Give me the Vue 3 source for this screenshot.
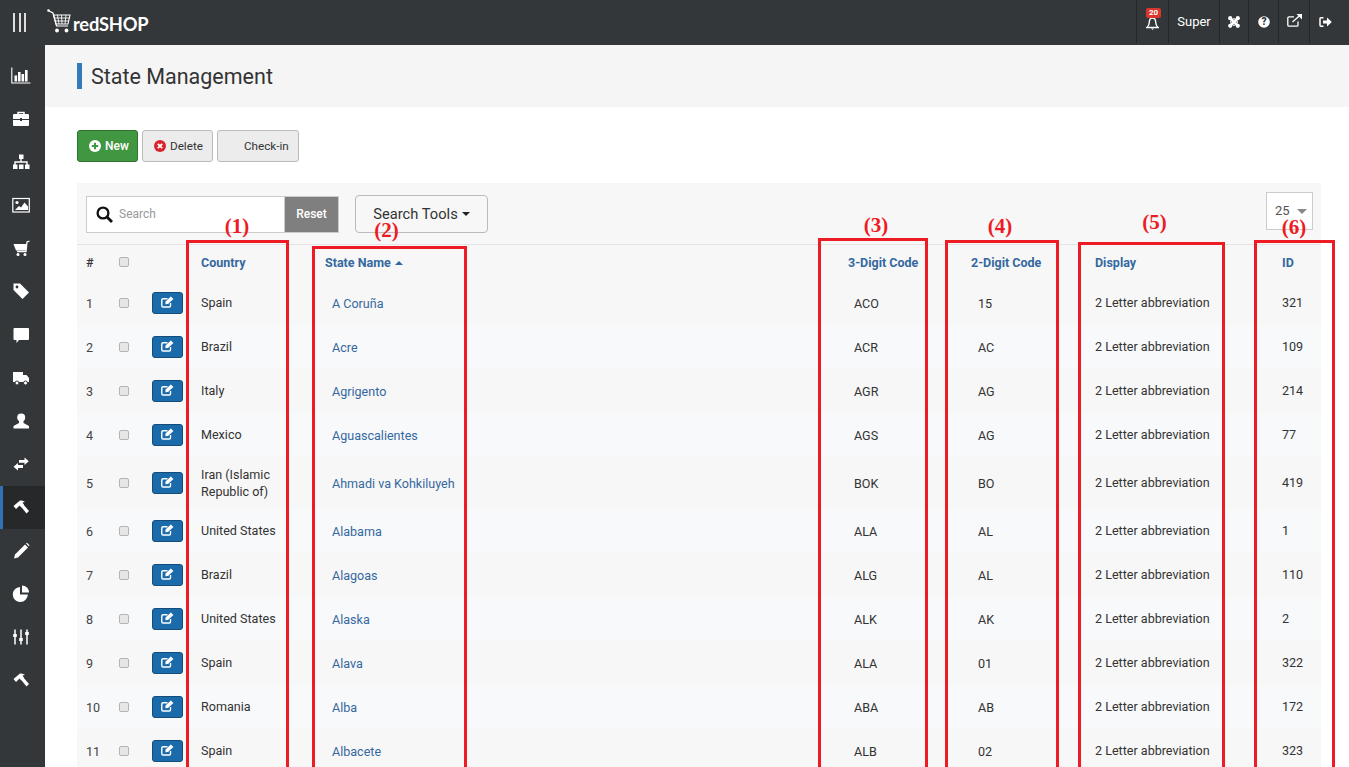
<template>
  <div class="app">
    <header class="topbar">
      <div class="burger"><span></span><span></span><span></span></div>
      <div class="logo">
        <svg class="cart" width="24" height="24" viewBox="0 0 24 24">
          <circle cx="1.5" cy="1.5" r="1.3" fill="#fff" />
          <path d="M2 2 L6 4 L9.5 17 H21" fill="none" stroke="#fff" stroke-width="1.2" />
          <path d="M6.5 6 H23 L21 15 H9 Z" fill="none" stroke="#fff" stroke-width="1.1" />
          <path d="M7 9 H22.5 M8 12 H22 M10.5 6 L12 15 M14.5 6 L15 15 M19 6 L18 15" stroke="#fff" stroke-width="0.9" fill="none" />
          <circle cx="10" cy="21.5" r="1.9" fill="#fff" />
          <circle cx="19.5" cy="21.5" r="1.9" fill="#fff" />
        </svg>
        <span class="logo-text">redSHOP</span>
      </div>
      <div class="top-actions">
        <div class="top-item bell">
          <svg width="13" height="15" viewBox="0 0 14 15"><path d="M7 1.5 C4.5 1.5 3.6 3.5 3.6 6 C3.6 9 2.6 10.5 1 11.8 H13 C11.4 10.5 10.4 9 10.4 6 C10.4 3.5 9.5 1.5 7 1.5 Z" fill="none" stroke="#fff" stroke-width="1.5" /><path d="M5.5 13 H8.5 L7 14.6 Z" fill="#fff" /></svg>
          <span class="badge">20</span>
        </div>
        <div class="top-item user">Super</div>
        <div class="top-item icon w29">
          <svg width="12" height="12" viewBox="0 0 12 12">
            <path d="M2.4 2.4 L9.6 9.6 M9.6 2.4 L2.4 9.6" stroke="#fff" stroke-width="2.8" />
            <path d="M2.2 6 L6 2.2 L9.8 6 L6 9.8 Z" fill="none" stroke="#fff" stroke-width="1" />
            <circle cx="2.2" cy="2.2" r="2.1" fill="#fff" />
            <circle cx="9.8" cy="2.2" r="2.1" fill="#fff" />
            <circle cx="2.2" cy="9.8" r="2.1" fill="#fff" />
            <circle cx="9.8" cy="9.8" r="2.1" fill="#fff" />
          </svg>
        </div>
        <div class="top-item icon w30">
          <svg width="12" height="12" viewBox="0 0 12 12"><circle cx="6" cy="6" r="5.8" fill="#fff" /><text x="6" y="9.4" text-anchor="middle" class="qmark">?</text></svg>
        </div>
        <div class="top-item icon w31">
          <svg class="lift" width="15" height="13" viewBox="0 0 15 13" fill="none" stroke="#fff" stroke-width="1.3"><path d="M11 7.5 V11 A1.2 1.2 0 0 1 9.8 12.2 H2 A1.2 1.2 0 0 1 0.8 11 V4 A1.2 1.2 0 0 1 2 2.8 H7" /><path d="M5.5 8 L12.5 1.8" /><path d="M9.5 0 H15 V5.5 Z" fill="#fff" stroke="none" /></svg>
        </div>
        <div class="top-item icon last">
          <svg width="13" height="10" viewBox="0 0 13 10" fill="#fff"><path d="M4.5 0.8 H2 A1 1 0 0 0 1 1.8 V8.2 A1 1 0 0 0 2 9.2 H4.5" fill="none" stroke="#fff" stroke-width="1.5" /><path d="M4 3.5 H8 V0.5 L12.8 5 L8 9.5 V6.5 H4 Z" /></svg>
        </div>
      </div>
    </header>

    <div class="body">
      <nav class="sidebar">
        <a v-for="(item, i) in navItems" :key="i" class="nav-item" :class="{ active: i === 10 }">
          <svg width="20" height="20" viewBox="0 0 20 20" v-html="item"></svg>
        </a>
      </nav>

      <main class="content">
        <div class="title-bar">
          <h1>State Management</h1>
        </div>

        <div class="page">
          <div class="toolbar">
            <button class="btn btn-new">
              <svg width="12" height="12" viewBox="0 0 12 12"><circle cx="6" cy="6" r="6" fill="#fff" /><path d="M6 2.8 V9.2 M2.8 6 H9.2" stroke="#419641" stroke-width="2" /></svg>
              New
            </button>
            <button class="btn btn-delete">
              <svg width="12" height="12" viewBox="0 0 12 12"><circle cx="6" cy="6" r="6" fill="#d9232e" /><path d="M3.8 3.8 L8.2 8.2 M8.2 3.8 L3.8 8.2" stroke="#fff" stroke-width="1.8" /></svg>
              Delete
            </button>
            <button class="btn btn-check">Check-in</button>
          </div>

          <section class="panel">
            <div class="filters">
              <div class="search">
                <div class="search-box">
                  <svg width="17" height="17" viewBox="0 0 17 17" fill="none" stroke="#111" stroke-width="2.3"><circle cx="7" cy="7" r="5.4" /><path d="M11 11 L16 16" stroke-width="2.8" /></svg>
                  <span>Search</span>
                </div>
                <div class="reset">Reset</div>
              </div>
              <button class="tools">Search Tools<i class="caret"></i></button>
              <div class="limit">25<i class="caret-grey"></i></div>
            </div>

            <table class="grid">
              <colgroup>
                <col style="width: 33px" />
                <col style="width: 33px" />
                <col style="width: 49px" />
                <col style="width: 124px" />
                <col />
                <col style="width: 123px" />
                <col style="width: 124px" />
                <col style="width: 187px" />
                <col style="width: 48px" />
              </colgroup>
              <thead>
                <tr>
                  <th class="num">#</th>
                  <th><span class="check"></span></th>
                  <th></th>
                  <th>Country</th>
                  <th>State Name <i class="sort"></i></th>
                  <th>3-Digit Code</th>
                  <th>2-Digit Code</th>
                  <th>Display</th>
                  <th>ID</th>
                </tr>
              </thead>
              <tbody>
                <tr v-for="(row, i) in rows" :key="row.id">
                  <td class="num">{{ i + 1 }}</td>
                  <td><span class="check"></span></td>
                  <td>
                    <span class="edit">
                      <svg width="13" height="12" viewBox="0 0 13 12" fill="none" stroke="#fff" stroke-width="1.4"><path d="M9.5 7 V9.8 A1.2 1.2 0 0 1 8.3 11 H2 A1.2 1.2 0 0 1 0.8 9.8 V4 A1.2 1.2 0 0 1 2 2.8 H6.5" /><path d="M4.3 8.3 L4.6 5.6 L9.8 0.6 L12.4 3 L7 8 Z" fill="#fff" stroke="none" /></svg>
                    </span>
                  </td>
                  <td :class="{ up: row.country.length < 20 }">{{ row.country }}</td>
                  <td class="indent"><a>{{ row.name }}</a></td>
                  <td class="indent code3">{{ row.code3 }}</td>
                  <td class="indent">{{ row.code2 }}</td>
                  <td class="up">2 Letter abbreviation</td>
                  <td class="up">{{ row.id }}</td>
                </tr>
              </tbody>
            </table>
          </section>
        </div>

        <div class="mark" v-for="m in marks" :key="m.n" :style="{ left: m.x + 'px', top: m.y + 'px', width: m.w + 'px' }">
          <span class="mark-label" :style="{ top: m.ly + 'px', marginLeft: m.dx + 'px' }">({{ m.n }})</span>
        </div>
      </main>
    </div>
  </div>
</template>

<script setup>
const hammer =
  '<path d="M2.5 9 L9 3.5 Q12 3 14 5 L11.5 5.5 L13 8 L10.5 10.5 L8.5 8.5 L5 12 Z" fill="#fff"/><path d="M9.5 9 L12 7 L18 14 L15.5 16.5 Z" fill="#fff"/>'

const navItems = [
  '<path d="M0.8 1.5 V17 H19.5" fill="none" stroke="#fff" stroke-width="1.1"/><rect x="3.5" y="9.5" width="2.6" height="6" fill="#fff"/><rect x="7" y="6" width="2.6" height="9.5" fill="#fff"/><rect x="10.5" y="8" width="2.6" height="7.5" fill="#fff"/><rect x="14" y="4" width="2.6" height="11.5" fill="#fff"/>',
  '<path d="M7 5 V3.5 H13 V5" fill="none" stroke="#fff" stroke-width="1.5"/><path d="M2 6 A1 1 0 0 1 3 5 H17 A1 1 0 0 1 18 6 V10 H11 V9 H9 V10 H2 Z" fill="#fff"/><path d="M2 11 H9 V12 H11 V11 H18 V16 A1 1 0 0 1 17 17 H3 A1 1 0 0 1 2 16 Z" fill="#fff"/>',
  '<rect x="8" y="2.5" width="4.5" height="4.5" fill="#fff"/><path d="M10 7 V10 M4 13 V10 H16 V13" fill="none" stroke="#fff" stroke-width="1.4"/><rect x="2" y="12.5" width="4.5" height="4.5" fill="#fff"/><rect x="8" y="12.5" width="4.5" height="4.5" fill="#fff"/><rect x="14" y="12.5" width="4.5" height="4.5" fill="#fff"/>',
  '<rect x="1.8" y="3.5" width="16.5" height="13.5" fill="none" stroke="#fff" stroke-width="1.2"/><circle cx="6" cy="7.5" r="1.6" fill="#fff"/><path d="M4 15 L8 11 L10 12.5 L13.5 7.5 L17 11.5 V15 Z" fill="#fff"/>',
  '<path d="M18.5 2 L16 3 L15 12.5 H6" fill="none" stroke="#fff" stroke-width="1.3"/><path d="M2.5 5 H15.8 L14.8 11.5 H5 Z" fill="#fff"/><circle cx="7" cy="15.5" r="1.5" fill="#fff"/><circle cx="14" cy="15.5" r="1.5" fill="#fff"/>',
  '<path d="M2.5 1.5 H9 L18 10.5 L11.5 17 L2.5 8 Z" fill="#fff"/><circle cx="6" cy="5" r="1.4" fill="#33373a"/>',
  '<path d="M3.5 3 H17 A1 1 0 0 1 18 4 V14 A1 1 0 0 1 17 15 H8 L5.5 18 V15 H3.5 A1 1 0 0 1 2.5 14 V4 A1 1 0 0 1 3.5 3 Z" fill="#fff"/>',
  '<path d="M2 4 H12 V14 H2 Z" fill="#fff"/><path d="M12 7 H15.5 L18 10 V14 H12 Z" fill="#fff"/><circle cx="6" cy="15" r="2" fill="#fff" stroke="#33373a"/><circle cx="14.5" cy="15" r="2" fill="#fff" stroke="#33373a"/>',
  '<circle cx="10.2" cy="6.5" r="4" fill="#fff"/><path d="M8 10 V12 L2.5 15 V17.5 H18 V15 L12.5 12 V10 Z" fill="#fff"/>',
  '<path d="M8 6 H13.5 V3.5 L17.8 7.3 L13.5 11 V8.8 H8 Z" fill="#fff"/><path d="M12 11 H7 V9 L2.5 12.8 L7 16.5 V14 H12 Z" fill="#fff"/>',
  hammer,
  '<path d="M3 17.5 L4 13.5 L14 3.5 L17 6.5 L7 16.5 Z" fill="#fff"/><path d="M15 2.5 L16 1.8 L18.5 4.3 L17.8 5.3 Z" fill="#fff"/>',
  '<path d="M9 3 A7.5 7.5 0 1 0 16.8 10.5 H9 Z" fill="#fff"/><path d="M11 1.5 A7 7 0 0 1 18 8.5 H11 Z" fill="#fff"/>',
  '<path d="M4 2.5 V7 M4 10 V17.5 M10 2.5 V11 M10 14 V17.5 M16 2.5 V5 M16 8 V17.5" stroke="#fff" stroke-width="1.5"/><rect x="2.2" y="7" width="3.6" height="3" fill="#fff"/><rect x="8.2" y="11" width="3.6" height="3" fill="#fff"/><rect x="14.2" y="5" width="3.6" height="3" fill="#fff"/>',
  hammer
]

const rows = [
  { country: 'Spain', name: 'A Coruña', code3: 'ACO', code2: '15', id: 321 },
  { country: 'Brazil', name: 'Acre', code3: 'ACR', code2: 'AC', id: 109 },
  { country: 'Italy', name: 'Agrigento', code3: 'AGR', code2: 'AG', id: 214 },
  { country: 'Mexico', name: 'Aguascalientes', code3: 'AGS', code2: 'AG', id: 77 },
  { country: 'Iran (Islamic Republic of)', name: 'Ahmadi va Kohkiluyeh', code3: 'BOK', code2: 'BO', id: 419 },
  { country: 'United States', name: 'Alabama', code3: 'ALA', code2: 'AL', id: 1 },
  { country: 'Brazil', name: 'Alagoas', code3: 'ALG', code2: 'AL', id: 110 },
  { country: 'United States', name: 'Alaska', code3: 'ALK', code2: 'AK', id: 2 },
  { country: 'Spain', name: 'Alava', code3: 'ALA', code2: '01', id: 322 },
  { country: 'Romania', name: 'Alba', code3: 'ABA', code2: 'AB', id: 172 },
  { country: 'Spain', name: 'Albacete', code3: 'ALB', code2: '02', id: 323 }
]

// red boxes drawn over the table, positions relative to the main area
const marks = [
  { n: 1, x: 141, y: 195, w: 103, ly: -29, dx: -1 },
  { n: 2, x: 267, y: 201, w: 155, ly: -31, dx: -6 },
  { n: 3, x: 773, y: 193, w: 110, ly: -28, dx: 6 },
  { n: 4, x: 900, y: 195, w: 114, ly: -29, dx: -4 },
  { n: 5, x: 1033, y: 197, w: 147, ly: -35, dx: 6 },
  { n: 6, x: 1209, y: 195, w: 81, ly: -28, dx: -1 }
]
</script>

<style>
html,
body {
  margin: 0;
  overflow: hidden;
}
</style>

<style scoped>
* {
  box-sizing: border-box;
}
.app {
  height: 100vh;
  overflow: hidden;
  font-family: Roboto, "Liberation Sans", sans-serif;
  font-size: 13px;
  color: #333;
  background: #fff;
}
.topbar {
  height: 45px;
  background: #33373a;
  display: flex;
  align-items: center;
}
.burger {
  width: 47px;
  padding-left: 13px;
  display: flex;
  gap: 3.5px;
}
.burger span {
  width: 2px;
  height: 19px;
  background: #ddd;
}
.logo {
  display: flex;
  align-items: flex-start;
  height: 45px;
  padding-top: 9px;
}
.logo-text {
  font-family: Lato, sans-serif;
  font-size: 18.3px;
  font-weight: 700;
  line-height: 24px;
  letter-spacing: -0.2px;
  color: #fff;
  margin: 3px 0 0 2px;
}
.top-actions {
  margin-left: auto;
  display: flex;
  height: 43px;
  align-self: flex-start;
}
.top-item {
  border-left: 1px solid #24272a;
  display: flex;
  align-items: center;
  justify-content: center;
  color: #fff;
  position: relative;
}
.bell {
  width: 32px;
  padding-top: 3px;
}
.user {
  width: 51px;
  padding-bottom: 1px;
}
.w29 {
  width: 29px;
}
.w30 {
  width: 30px;
}
.w31 {
  width: 31px;
}
.lift {
  margin-bottom: 2px;
}
.last {
  width: 40px;
  padding-right: 8px;
  padding-top: 1px;
}
.badge {
  position: absolute;
  top: 8px;
  left: 9px;
  width: 15px;
  height: 10px;
  border-radius: 2px;
  background: #d9362e;
  color: #fff;
  font-size: 8px;
  font-weight: 700;
  line-height: 10px;
  text-align: center;
}
.qmark {
  font-size: 10px;
  font-weight: 900;
  fill: #33373a;
}
.body {
  display: flex;
  height: calc(100vh - 45px);
}
.sidebar {
  width: 45px;
  flex: none;
  background: #33373a;
  padding-top: 9.4px;
}
.nav-item {
  height: 43.15px;
  display: flex;
  align-items: center;
  justify-content: center;
  padding-right: 4px;
}
.nav-item.active {
  background: #272829;
  border-left: 3px solid #2f72b5;
  padding-right: 7px;
}
.content {
  flex: 1;
  position: relative;
  min-width: 0;
}
.title-bar {
  height: 62px;
  background: #f5f5f5;
  padding: 18px 32px;
}
.title-bar h1 {
  margin: 0;
  height: 26px;
  border-left: 5px solid #337ab7;
  padding-left: 9px;
  font-size: 21.5px;
  font-weight: 400;
  line-height: 28px;
  color: #333;
}
.page {
  padding: 23px 28px 0 32px;
}
.toolbar {
  display: flex;
  gap: 4px;
  height: 32px;
}
.btn {
  height: 32px;
  font: inherit;
  font-size: 11.7px;
  border-radius: 3px;
  display: flex;
  align-items: center;
  padding: 0;
}
.btn svg {
  margin-right: 4px;
}
.btn-new {
  width: 61px;
  background: #419641;
  border: 1px solid #2d742d;
  color: #fff;
  font-size: 12px;
  font-weight: 500;
  padding-left: 11px;
}
.btn-delete {
  width: 71px;
  background: #ececec;
  border: 1px solid #bbb;
  color: #333;
  padding-left: 11px;
}
.btn-check {
  width: 82px;
  background: #ececec;
  border: 1px solid #bbb;
  color: #333;
  padding-left: 26px;
}
.panel {
  margin-top: 21px;
  background: #f7f7f7;
}
.filters {
  height: 62px;
  display: flex;
  align-items: flex-start;
  border-bottom: 1px solid #e4e4e4;
  padding: 12px 8px 0 9px;
}
.search {
  display: flex;
  height: 37px;
  margin-top: 1px;
}
.search-box {
  width: 198px;
  background: #fff;
  border: 1px solid #ccc;
  border-right: 0;
  display: flex;
  align-items: center;
  padding-left: 9px;
  padding-bottom: 1px;
  color: #999;
  font-size: 12px;
  gap: 6px;
}
.reset {
  width: 55px;
  background: #7f7f7f;
  border: 1px solid #ccc;
  color: #fff;
  font-size: 12px;
  font-weight: 500;
  display: flex;
  align-items: center;
  justify-content: center;
  padding-bottom: 1px;
}
.tools {
  width: 133px;
  height: 38px;
  margin-left: 16px;
  background: #f7f7f7;
  border: 1px solid #bbb;
  border-radius: 4px;
  font: inherit;
  font-size: 14.7px;
  color: #333;
  padding: 0;
}
.caret {
  display: inline-block;
  margin-left: 4px;
  vertical-align: 3px;
  border-top: 4px solid #222;
  border-left: 4px solid transparent;
  border-right: 4px solid transparent;
}
.limit {
  margin-left: auto;
  margin-top: -3px;
  width: 47px;
  height: 38px;
  background: #fff;
  border: 1px solid #ccc;
  display: flex;
  align-items: center;
  padding-left: 8px;
  padding-bottom: 2px;
  color: #555;
  font-size: 13px;
}
.caret-grey {
  margin-left: 7px;
  margin-top: 2px;
  border-top: 5px solid #888;
  border-left: 5px solid transparent;
  border-right: 5px solid transparent;
}
.grid {
  width: 100%;
  table-layout: fixed;
  border-collapse: collapse;
}
.grid th {
  height: 36px;
  padding: 0 9px 2px;
  text-align: left;
  font-size: 12.5px;
  font-weight: 700;
  color: #35689f;
  background: #f7f7f7;
}
.grid th.num {
  color: #333;
  font-weight: 500;
}
.grid td {
  height: 44px;
  padding: 9px;
  vertical-align: middle;
  font-size: 12.55px;
  line-height: 17px;
}
.grid tbody tr:nth-child(even) td {
  background: #f8f9fb;
}
.grid td.num {
  color: #444;
}
.up {
  position: relative;
  top: -1px;
}
.indent {
  padding-left: 16px !important;
}
.code3 {
  padding-left: 15px !important;
}
.indent a {
  color: #35689f;
}
.check {
  display: block;
  width: 10px;
  height: 10px;
  border: 1px solid #b4b4b4;
  border-radius: 2px;
  background: #e6e6e6;
}
.edit {
  display: flex;
  align-items: center;
  justify-content: center;
  width: 31px;
  height: 22px;
  background: #1b6aaa;
  border: 1px solid #124d7e;
  border-radius: 3px;
  padding-bottom: 2px;
}
.sort {
  display: inline-block;
  vertical-align: 2px;
  margin-left: 1px;
  border-bottom: 4px solid #35689f;
  border-left: 4px solid transparent;
  border-right: 4px solid transparent;
}
.mark {
  position: absolute;
  height: 700px;
  border: 3px solid #ed1c24;
}
.mark-label {
  position: absolute;
  left: -3px;
  right: -3px;
  text-align: center;
  font-family: "Liberation Serif", serif;
  font-size: 21px;
  font-weight: 700;
  line-height: 24px;
  color: #ed1c24;
}
</style>
